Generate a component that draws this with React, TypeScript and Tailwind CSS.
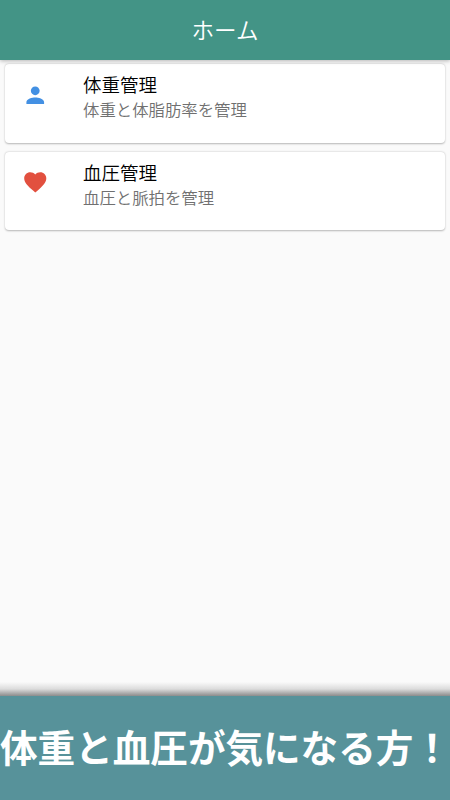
import type { IconType } from "react-icons";
import { MdFavorite, MdPerson } from "react-icons/md";

type MenuItem = {
  icon: IconType;
  color: string;
  title: string;
  desc: string;
};

const MENU: MenuItem[] = [
  { icon: MdPerson,   color: "text-[#4390e3]", title: "体重管理", desc: "体重と体脂肪率を管理" },
  { icon: MdFavorite, color: "text-[#e2503f]", title: "血圧管理", desc: "血圧と脈拍を管理" },
];

function MenuCard({ icon: Icon, color, title, desc }: MenuItem) {
  return (
    <li className="flex h-[78.5px] rounded bg-white shadow-[0_0.5px_2px_rgba(0,0,0,0.28)]">
      <div className="flex w-[78.5px] shrink-0 pl-[17px] pt-[17.5px]">
        <Icon size={26.5} className={color} />
      </div>
      <div className="pt-[7px]">
        <h2 className="text-[18.5px] leading-[26px] font-[350] text-black">{title}</h2>
        <p className="text-[16.4px] leading-[24px] font-[350] text-[#707070]">{desc}</p>
      </div>
    </li>
  );
}

export default function App() {
  return (
    <div className="flex h-[800px] w-[450px] flex-col overflow-hidden bg-[#fafafa] font-['Noto_Sans_CJK_JP',sans-serif]">
      {/* App bar */}
      <header className="z-10 flex h-[59.5px] shrink-0 items-center justify-center bg-[#439486] pb-[2px] shadow-[0_1px_4px_rgba(0,0,0,0.28)]">
        <h1 className="text-[22.5px] leading-[24px] font-[350] text-white">ホーム</h1>
      </header>

      <main className="flex-1 pl-[4.5px] pr-[5px] pt-[4.5px]">
        <ul className="flex flex-col gap-[9px]">
          {MENU.map((item) => (
            <MenuCard key={item.title} {...item} />
          ))}
        </ul>
      </main>

      {/* Caption banner */}
      <div className="h-[14px] shrink-0 bg-linear-to-b from-[#fafafa] via-[#dcdcdc] to-[#8c8c8c]" />
      <footer className="flex h-[104.5px] shrink-0 items-center bg-[#57929a] pb-[4px]">
        <p className="whitespace-nowrap text-[37.6px] leading-none font-bold text-white">
          体重と血圧が気になる方！
        </p>
      </footer>
    </div>
  );
}
